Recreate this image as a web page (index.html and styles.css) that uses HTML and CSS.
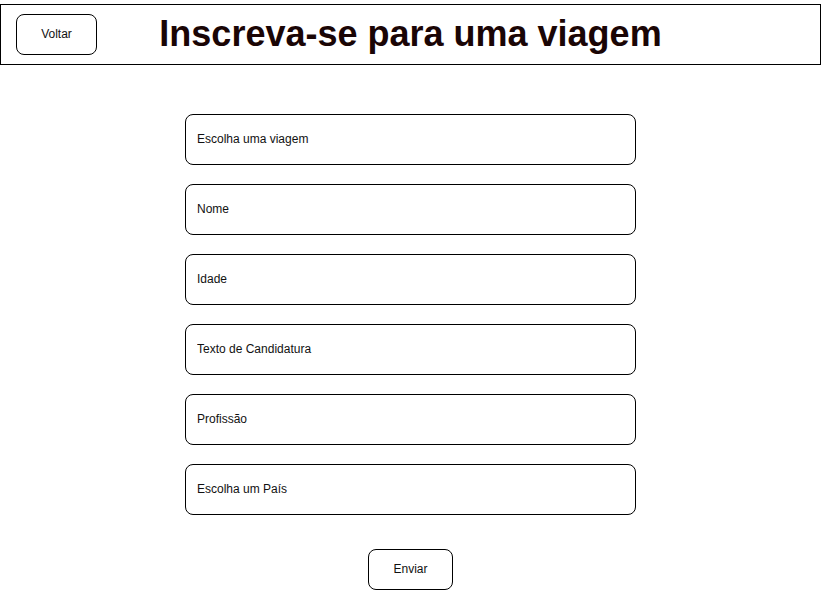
FILE: index.html
```html
<!DOCTYPE html>
<html lang="pt">
<head>
<meta charset="utf-8">
<title>Inscreva-se para uma viagem</title>
<link rel="stylesheet" href="styles.css">
</head>
<body>
<header class="topbar">
  <div class="left"><button class="btn btn-back">Voltar</button></div>
  <h1 class="title">Inscreva-se para uma viagem</h1>
  <div class="right"></div>
</header>
<form class="form">
  <input class="field" type="text" placeholder="Escolha uma viagem">
  <input class="field" type="text" placeholder="Nome">
  <input class="field" type="text" placeholder="Idade">
  <input class="field" type="text" placeholder="Texto de Candidatura">
  <input class="field" type="text" placeholder="Profissão">
  <input class="field" type="text" placeholder="Escolha um País">
  <button class="btn btn-send" type="button">Enviar</button>
</form>
</body>
</html>
```
FILE: styles.css
```css
html, body {
  margin: 0;
  padding: 0;
  background: #fff;
  font-family: "Liberation Sans", Arial, sans-serif;
}
.topbar {
  margin-top: 4px;
  width: 821px;
  box-sizing: border-box;
  height: 61px;
  border: 1px solid #000;
  display: grid;
  grid-template-columns: 1fr auto 1fr;
  align-items: center;
}
.left {
  padding-left: 15px;
  display: flex;
  align-items: center;
}
.title {
  margin: 0 0 2px;
  font-size: 36px;
  font-weight: bold;
  color: #1a0505;
  line-height: 1;
}
.btn {
  background: #fff;
  border: 1px solid #000;
  border-radius: 8px;
  font-family: "Liberation Sans", Arial, sans-serif;
  font-size: 12px;
  color: #111;
  padding: 0 0 2px;
  cursor: pointer;
}
.btn-back {
  width: 81px;
  height: 41px;
}
.form {
  margin-top: 49px;
  display: flex;
  flex-direction: column;
  align-items: center;
  gap: 19px;
}
.field {
  box-sizing: border-box;
  width: 451px;
  height: 51px;
  margin: 0;
  border: 1px solid #000;
  border-radius: 8px;
  padding: 0 11px 2px;
  font-family: "Liberation Sans", Arial, sans-serif;
  font-size: 12px;
  color: #111;
  outline: none;
}
.field::placeholder {
  color: #111;
  opacity: 1;
}
.btn-send {
  margin-top: 15px;
  width: 85px;
  height: 41px;
}
```
